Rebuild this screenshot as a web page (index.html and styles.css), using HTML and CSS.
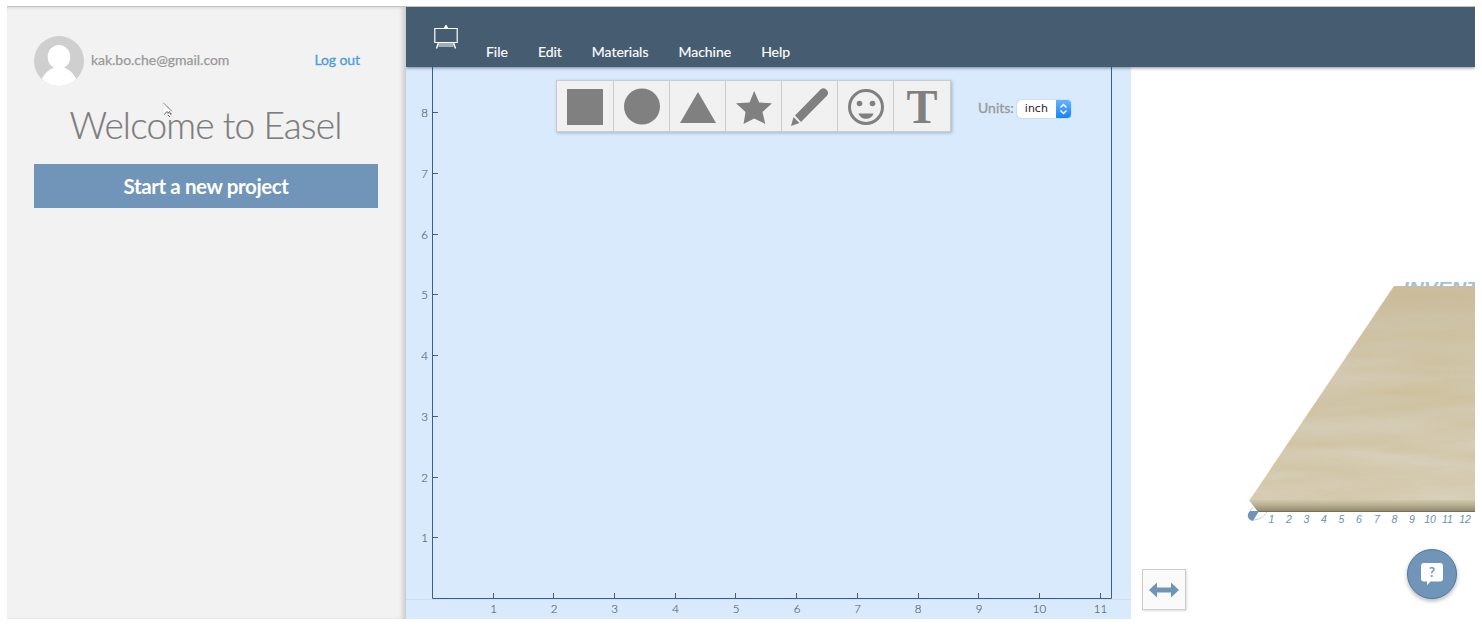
FILE: index.html
```html
<!DOCTYPE html>
<html lang="en">
<head>
<meta charset="utf-8">
<title>Easel</title>
<link rel="stylesheet" href="styles.css">
</head>
<body>
<div class="app">
  <aside class="sidebar">
    <div class="account">
      <svg class="avatar" viewBox="0 0 50 50"><defs><clipPath id="face"><circle cx="25" cy="25" r="25"/></clipPath></defs><g clip-path="url(#face)"><path fill="#cfcfcf" d="M0 0h50v50H0z"/><ellipse cx="25" cy="21" rx="11.300" ry="12"/><path d="M5 50C9 37 16 31 25 31s16 6 20 19z"/></g></svg>
      <span class="email">kak.bo.che@gmail.com</span>
      <a class="logout">Log out</a>
    </div>
    <h1 class="welcome">Welcome to Easel</h1>
    <button class="start">Start a new project</button>
    <svg class="pointer" viewBox="0 0 12 18"><path d="M1 1v13l3-3 2.500 5 3-1.500L7.500 10H11z" fill="#fff" stroke="#d8d8d8" stroke-width=".6"/><path d="M2 2.500l7.500 7.500M2.500 13.500l2.500-3 1 2 1.500-2 1 3 1.500-1M6 14l2 2" fill="none" stroke="#444" stroke-width="1" stroke-dasharray="1.200 .5"/></svg>
  </aside>
  <main class="main">
    <header class="header">
      <svg class="logo" viewBox="0 0 24 26" fill="none" stroke="#fff"><path d="M.8 4.500h22.400v14H.8z" stroke-width="1.200"/><path d="M3.500 20h17M4.500 22h15" stroke-width="1"/><path d="M4.200 19.500L2.500 24.500M19.800 19.500l1.700 5" stroke-width="1.400"/><path d="M12 1l1.700 3h-3.400z" fill="#fff" stroke-width=".8"/></svg>
      <nav class="menu"><a>File</a><a>Edit</a><a>Materials</a><a>Machine</a><a>Help</a></nav>
    </header>
    <div class="workspace">
      <section class="canvas">
        <svg class="grid" viewBox="406 67 725 552">
          <path class="floor" d="M406 599.500h725"/>
          <path class="axis" d="M432.500 67v531.500h679V67"/>
          <path class="ticks" d="M433 112.500h5M433 173.500h5M433 234.500h5M433 294.500h5M433 355.500h5M433 416.500h5M433 477.500h5M433 537.500h5M493.500 598v-5M553.500 598v-5M614.500 598v-5M675.500 598v-5M735.500 598v-5M796.500 598v-5M857.500 598v-5M918.500 598v-5M978.500 598v-5M1039.500 598v-5M1100.500 598v-5"/>
          <g class="labels">
            <text x="424.500" y="117">8</text><text x="424.500" y="178">7</text><text x="424.500" y="239">6</text><text x="424.500" y="299">5</text><text x="424.500" y="360">4</text><text x="424.500" y="421">3</text><text x="424.500" y="482">2</text><text x="424.500" y="542">1</text>
            <text x="493.500" y="613">1</text><text x="554" y="613">2</text><text x="614.500" y="613">3</text><text x="675.500" y="613">4</text><text x="736" y="613">5</text><text x="797" y="613">6</text><text x="857.500" y="613">7</text><text x="918" y="613">8</text><text x="979" y="613">9</text><text x="1039.500" y="613">10</text><text x="1100.500" y="613">11</text>
          </g>
        </svg>
        <div class="tools">
          <div class="toolbar">
            <span class="tool"><svg viewBox="0 0 56 50"><path d="M10 8h36v36H10z"/></svg></span>
            <span class="tool"><svg viewBox="0 0 56 50"><circle cx="28" cy="25.500" r="18"/></svg></span>
            <span class="tool"><svg viewBox="0 0 56 50"><path d="M28 11l18 31H10z"/></svg></span>
            <span class="tool"><svg viewBox="0 0 56 50"><path d="M28.200 10l5 11.500 12.800.8-9.500 8.700 2.800 12-11.100-5.500L17.500 43l2-12L10 22.300l13.500-.8z"/></svg></span>
            <span class="tool"><svg viewBox="0 0 56 50"><path d="M13 34.500L38.500 8.500q3-2.500 6 .3t.4 6L19 41z"/><path d="M11.500 36l6 6L9 45z"/></svg></span>
            <span class="tool"><svg viewBox="0 0 56 50"><circle cx="28" cy="26" r="16.500" fill="none" stroke="#808080" stroke-width="3"/><circle cx="21.500" cy="22.500" r="2.800"/><circle cx="34.500" cy="22.500" r="2.800"/><path d="M20.500 32.500h15c-1 3.300-4 5.300-7.500 5.300s-6.500-2-7.500-5.300z"/></svg></span>
            <span class="tool letter"><svg viewBox="0 0 56 50"><text x="28" y="42" textLength="31" lengthAdjust="spacingAndGlyphs">T</text></svg></span>
          </div>
          <span class="units">Units:</span>
          <span class="select"><span class="value">inch</span><span class="stepper"><svg viewBox="0 0 15 18"><path d="M4.500 7.500l3-3 3 3M4.500 10.500l3 3 3-3" fill="none" stroke="#fff" stroke-width="1.500"/></svg></span></span>
        </div>
      </section>
      <section class="preview">
        <svg class="scene" viewBox="1131 67 344 552">
          <defs>
            <linearGradient id="wood" x1="0" y1="0" x2="0" y2="1"><stop offset="0" stop-color="#cbbfa6"/><stop offset=".22" stop-color="#d0c5aa"/><stop offset=".42" stop-color="#d5ccb7"/><stop offset=".55" stop-color="#d2c8ae"/><stop offset=".7" stop-color="#d6ceb8"/><stop offset="1" stop-color="#d8d0ba"/></linearGradient>
            <linearGradient id="edge" x1="0" y1="0" x2="0" y2="1"><stop offset="0" stop-color="#d0c8ae"/><stop offset=".5" stop-color="#b3aa8c"/><stop offset="1" stop-color="#8d8568"/></linearGradient>
            <filter id="grain" x="0" y="0" width="1" height="1" color-interpolation-filters="sRGB"><feTurbulence type="fractalNoise" baseFrequency=".008 .06" numOctaves="4" seed="4"/><feColorMatrix values="0 0 0 0 .79  0 0 0 0 .72  0 0 0 0 .54  .8 0 0 0 -.2"/><feComposite in2="SourceGraphic" operator="in"/></filter>
            <clipPath id="mark"><path d="M1400 280h75v6h-75z"/></clipPath>
          </defs>
          <g clip-path="url(#mark)"><text class="brand" x="1403" y="293.500" textLength="76" lengthAdjust="spacingAndGlyphs">INVENT</text></g>
          <path d="M1394 286h81v215h-226z" fill="url(#wood)"/>
          <path d="M1394 286h81v215h-226z" filter="url(#grain)"/>
          <path d="M1249 500h226v12h-217z" fill="url(#edge)"/>
          <path d="M1258 511.500h217" stroke="#75705c"/>
          <path d="M1250 511h9l-6 10q-4-1-5-4t2-6z" fill="#6f94b7"/>
          <path d="M1254 520q9-1 13-8M1250 511l3-4" fill="none" stroke="#a9bccd" stroke-width=".7"/>
          <g class="ruler"><text x="1271.500" y="523">1</text><text x="1289" y="523">2</text><text x="1306.500" y="523">3</text><text x="1324" y="523">4</text><text x="1341.500" y="523">5</text><text x="1359" y="523">6</text><text x="1377" y="523">7</text><text x="1394.500" y="523">8</text><text x="1412" y="523">9</text><text x="1430" y="523">10</text><text x="1447.500" y="523">11</text><text x="1465" y="523">12</text></g>
        </svg>
        <div class="controls">
          <span class="resize"><svg viewBox="0 0 30 16"><path d="M0 8l8-7.500v5h14v-5L30 8l-8 7.500v-5H8v5z" fill="#6f94b7"/></svg></span>
          <span class="help"><svg viewBox="0 0 22 23"><path d="M3 0h16q3 0 3 3v12.500q0 3-3 3H9.500L6 22v-3.500H3q-3 0-3-3V3q0-3 3-3z" fill="#fff"/><text class="question" x="11" y="14">?</text></svg></span>
        </div>
      </section>
    </div>
  </main>
</div>
</body>
</html>
```
FILE: styles.css
```css
* { box-sizing: border-box; }
body { margin: 0; height: 627px; padding: 6px 7px 8px; background: #fff; font-family: Lato, sans-serif; overflow: hidden; }
svg { display: block; }
.app { display: flex; height: 613px; border-top: 1px solid #c0c4bc; }
.sidebar { position: relative; width: 399px; padding: 29px 28px 0 27px; background: #f2f2f2; box-shadow: inset -5px 0 5px -2px #c8c8c8, inset 0 3px 3px -2px #ddd; }
.account { display: flex; align-items: center; height: 50px; }
.avatar { width: 50px; height: 50px; fill: #fff; }
.email { margin: 0 0 3px 7px; color: #999; font-size: 14px; letter-spacing: -.03px; -webkit-text-stroke: .25px; }
.logout { margin: 0 18px 3px auto; color: #4c9cd6; font-size: 14px; letter-spacing: -.1px; -webkit-text-stroke: .3px; }
.welcome { margin: 15px 0 0; height: 48px; line-height: 48px; color: #7d7d7d; font-size: 37px; font-weight: 300; letter-spacing: -.85px; text-align: center; text-indent: -1px; white-space: nowrap; -webkit-text-stroke: .2px; }
.start { display: block; width: 344px; height: 44px; margin: 15px 0 0; padding: 0; border: 0; background: #7195b8; color: #fff; font: 700 20.500px Lato, sans-serif; letter-spacing: -.38px; }
.pointer { position: absolute; left: 155px; top: 94px; width: 12px; height: 18px; }
.main { display: flex; flex-direction: column; flex: 1; }
.header { position: relative; z-index: 2; display: flex; height: 60px; padding: 17px 28px 0; background: #465c70; box-shadow: 0 1px 3px rgba(60, 80, 110, .65); clip-path: inset(0 0 -6px 0); }
.logo { width: 24px; height: 26px; }
.menu { display: flex; gap: 30px; margin: 19px 0 0 28px; color: #fff; font-size: 14px; line-height: 17px; letter-spacing: -.02px; -webkit-text-stroke: .15px; }
.workspace { display: flex; flex: 1; }
.canvas { position: relative; width: 725px; height: 552px; background: #d8eafb; }
.grid { width: 725px; height: 552px; }
.axis { fill: none; stroke: #3d5c91; }
.floor { stroke: #cddff0; }
.ticks { stroke: #46607a; }
.labels { fill: #4c5e70; font-size: 11.500px; font-weight: 300; text-anchor: middle; stroke: #4c5e70; stroke-width: .15px; }
.tools { position: absolute; top: 13px; left: 150px; display: flex; }
.toolbar { display: flex; height: 52px; border: 1px solid #ccc; background: #f1f1f1; box-shadow: 1px 1px 3px rgba(90, 110, 135, .45); }
.tool { width: 56px; height: 50px; border-right: 1px solid #ccc; fill: #808080; }
.tool:first-child { width: 57px; }
.tool:last-child { border-right: 0; }
.tool svg { width: 56px; height: 50px; overflow: visible; }
.letter { font: 700 48px "Liberation Serif", serif; text-anchor: middle; }
.units { margin: 19px 0 0 27px; color: #999; font-size: 14px; line-height: 18px; -webkit-text-stroke: .3px; }
.select { display: flex; width: 54px; height: 18px; margin: 20px 0 0 3px; border-radius: 4px; background: #fff; overflow: hidden; box-shadow: 0 0 1px #5b7da0; }
.value { width: 39px; padding-left: 8px; color: #222; font: 11px/18px "DejaVu Sans", sans-serif; }
.stepper { width: 15px; background: linear-gradient(#67b4fc, #1783fb); }
.preview { position: relative; flex: 1; background: #fff; }
.scene { width: 344px; height: 552px; }
.brand { fill: #a5bfda; font: italic 700 16px "Liberation Sans", sans-serif; }
.ruler { fill: #6d8faf; font: italic 10.500px "Liberation Sans", sans-serif; text-anchor: middle; -webkit-text-stroke: .15px; }
.controls { position: absolute; left: 11px; right: 18px; bottom: 9px; display: flex; justify-content: space-between; align-items: flex-end; }
.resize { display: grid; place-items: center; width: 44px; height: 41px; border: 1px solid #ccc; background: #fafafa; box-shadow: 1px 1px 2px #ddd; }
.resize svg { width: 30px; height: 16px; }
.help { display: grid; place-items: center; width: 50px; height: 50px; margin-bottom: 11px; border: 1px solid #4f7ba1; border-radius: 50%; background: #7095b8; box-shadow: 0 2px 4px rgba(0, 0, 0, .3); }
.help svg { width: 22px; height: 23px; }
.question { fill: #7095b8; font: 700 13px Lato, sans-serif; text-anchor: middle; }
```
